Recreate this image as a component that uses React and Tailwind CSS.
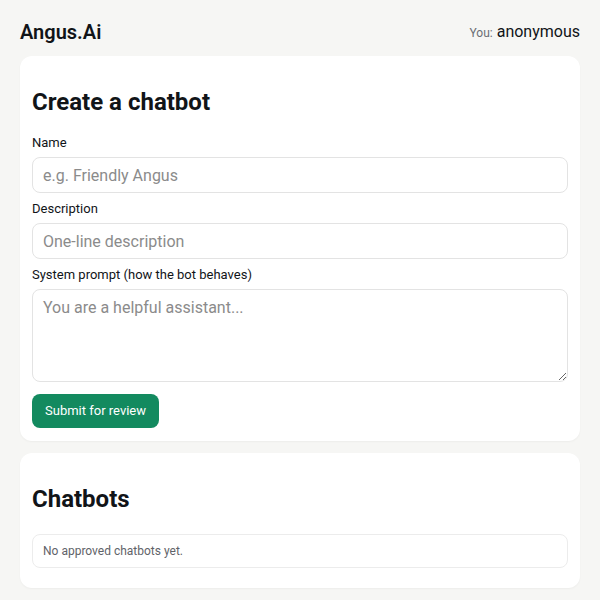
import React from "react";

const font = { fontFamily: "Roboto, 'Liberation Sans', sans-serif" };

const Field = ({ label, placeholder, first }) => (
  <div className={first ? "" : "mt-[7px]"}>
    <label className="block text-[13px] leading-[18px] text-[#111418]">{label}</label>
    <input
      placeholder={placeholder}
      className="mt-[5px] block h-9 w-full rounded-lg border border-[#e3e3e3] bg-white px-[10px] text-base text-[#111418] placeholder:text-[#8b8b8b] outline-none"
    />
  </div>
);

export default function App() {
  return (
    <div
      className="min-h-screen bg-[#f6f6f4] px-5 pb-3 text-[#111418]"
      style={font}
    >
      <header className="flex items-center justify-between pt-[18px] pb-[10px]">
        <h1 className="text-xl leading-7 font-semibold">Angus.Ai</h1>
        <div className="flex items-baseline gap-1">
          <span className="text-xs text-[#6b6f75]">You:</span>
          <span className="text-base text-[#111418]">anonymous</span>
        </div>
      </header>

      <section className="rounded-xl bg-white px-3 pt-[30px] pb-[13px] shadow-[0_1px_2px_rgba(0,0,0,0.04)]">
        <h2 className="text-2xl leading-8 font-bold">Create a chatbot</h2>
        <div className="mt-4">
          <Field first label="Name" placeholder="e.g. Friendly Angus" />
          <Field label="Description" placeholder="One-line description" />
          <div className="mt-[7px]">
            <label className="block text-[13px] leading-[18px]">
              System prompt (how the bot behaves)
            </label>
            <textarea
              placeholder="You are a helpful assistant..."
              className="mt-[5px] block h-[93px] w-full rounded-lg border border-[#e3e3e3] bg-white px-[10px] py-[6px] text-base leading-6 placeholder:text-[#8b8b8b] outline-none"
            />
          </div>
          <button className="mt-3 h-[34px] rounded-lg bg-[#138a5f] px-[13px] text-[13px] text-white">
            Submit for review
          </button>
        </div>
      </section>

      <section className="mt-3 rounded-xl bg-white px-3 pt-[30px] pb-5 shadow-[0_1px_2px_rgba(0,0,0,0.04)]">
        <h2 className="text-2xl leading-8 font-bold">Chatbots</h2>
        <div className="mt-[19px] flex h-[34px] items-center rounded-lg border border-[#ececec] px-[10px] text-xs text-[#5f6369]">
          No approved chatbots yet.
        </div>
      </section>
    </div>
  );
}
